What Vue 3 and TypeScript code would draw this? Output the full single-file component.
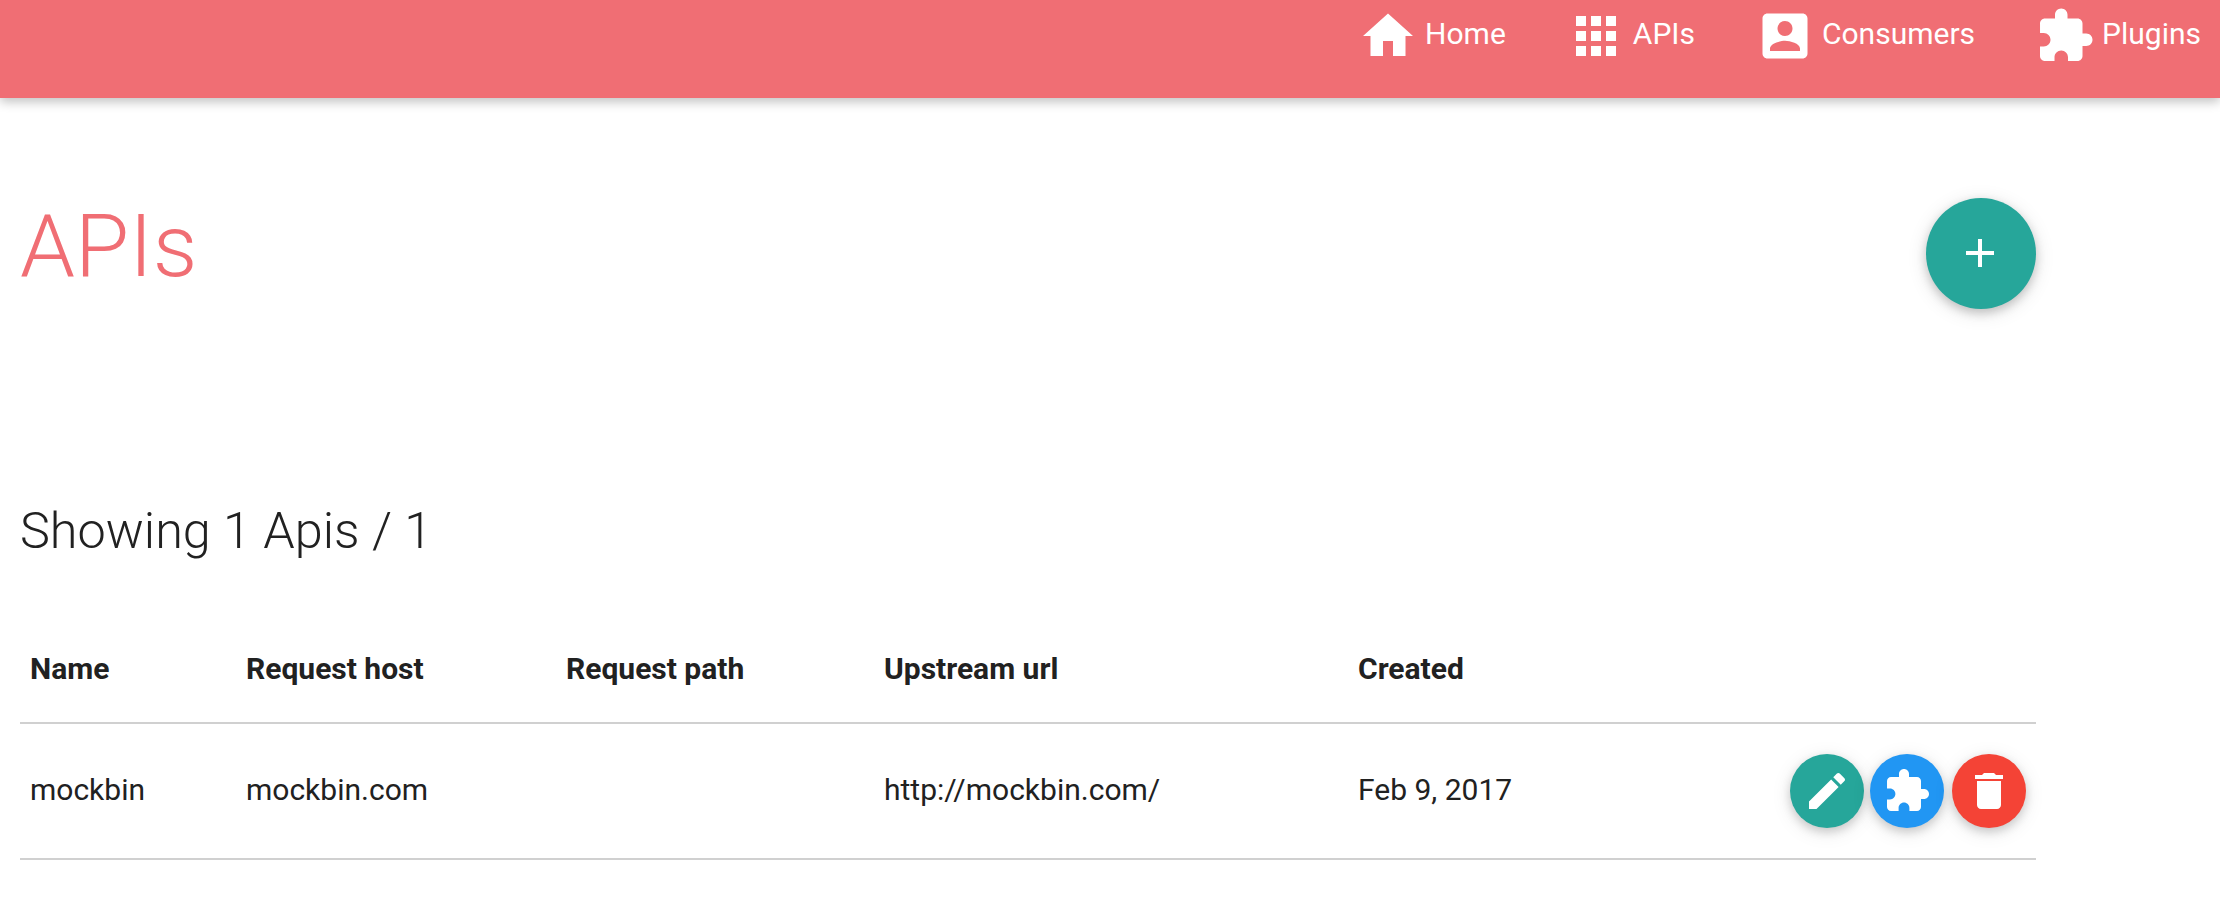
<template>
  <div class="page">
    <header class="topbar">
      <nav class="nav">
        <a v-for="link in navLinks" :key="link.label" class="nav-link" href="#">
          <svg class="nav-icon" viewBox="0 0 24 24"><path :d="link.icon" /></svg>
          <span class="nav-label">{{ link.label }}</span>
        </a>
      </nav>
    </header>

    <main class="content">
      <div class="title-row">
        <h1>APIs</h1>
        <button class="fab" type="button">
          <svg viewBox="0 0 24 24"><path d="M19 13h-6v6h-2v-6H5v-2h6V5h2v6h6v2z" /></svg>
        </button>
      </div>

      <h2>Showing {{ apis.length }} Apis / {{ apis.length }}</h2>

      <table>
        <colgroup>
          <col class="col-name" />
          <col class="col-host" />
          <col class="col-path" />
          <col class="col-upstream" />
          <col class="col-created" />
          <col />
        </colgroup>
        <thead>
          <tr>
            <th>Name</th>
            <th>Request host</th>
            <th>Request path</th>
            <th>Upstream url</th>
            <th>Created</th>
            <th></th>
          </tr>
        </thead>
        <tbody>
          <tr v-for="api in apis" :key="api.name">
            <td>{{ api.name }}</td>
            <td>{{ api.host }}</td>
            <td>{{ api.path }}</td>
            <td>{{ api.upstream }}</td>
            <td>{{ api.created }}</td>
            <td>
              <div class="actions">
                <button v-for="action in actions" :key="action.name" class="round-btn" :class="action.name" type="button">
                  <svg viewBox="0 0 24 24"><path :d="action.icon" /></svg>
                </button>
              </div>
            </td>
          </tr>
        </tbody>
      </table>
    </main>
  </div>
</template>

<script setup lang="ts">
const homeIcon = 'M10 20v-6h4v6h5v-8h3L12 3 2 12h3v8z'
const appsIcon = 'M4 8h4V4H4v4zm6 12h4v-4h-4v4zm-6 0h4v-4H4v4zm0-6h4v-4H4v4zm6 0h4v-4h-4v4zm6-10v4h4V4h-4zm-6 4h4V4h-4v4zm6 6h4v-4h-4v4zm0 6h4v-4h-4v4z'
const accountIcon = 'M3 5v14c0 1.1.89 2 2 2h14c1.1 0 2-.9 2-2V5c0-1.1-.9-2-2-2H5c-1.11 0-2 .9-2 2zm12 4c0 1.66-1.34 3-3 3s-3-1.34-3-3 1.34-3 3-3 3 1.34 3 3zm-9 8c0-2 4-3.1 6-3.1s6 1.1 6 3.1v1H6v-1z'
const puzzleIcon = 'M20.5 11H19V7c0-1.1-.9-2-2-2h-4V3.5C13 2.12 11.88 1 10.5 1S8 2.12 8 3.5V5H4c-1.1 0-1.99.9-1.99 2v3.8H3.5c1.49 0 2.7 1.21 2.7 2.7s-1.21 2.7-2.7 2.7H2V20c0 1.1.9 2 2 2h3.8v-1.5c0-1.49 1.21-2.7 2.7-2.7 1.49 0 2.7 1.21 2.7 2.7V22H17c1.1 0 2-.9 2-2v-4h1.5c1.38 0 2.5-1.12 2.5-2.5S21.88 11 20.5 11z'
const editIcon = 'M3 17.25V21h3.75L17.81 9.94l-3.75-3.75L3 17.25zM20.71 7.04c.39-.39.39-1.02 0-1.41l-2.34-2.34c-.39-.39-1.02-.39-1.41 0l-1.83 1.83 3.75 3.75 1.83-1.83z'
const deleteIcon = 'M6 19c0 1.1.9 2 2 2h8c1.1 0 2-.9 2-2V7H6v12zM19 4h-3.5l-1-1h-5l-1 1H5v2h14V4z'

const navLinks = [
  { label: 'Home', icon: homeIcon },
  { label: 'APIs', icon: appsIcon },
  { label: 'Consumers', icon: accountIcon },
  { label: 'Plugins', icon: puzzleIcon },
]

const actions = [
  { name: 'edit', icon: editIcon },
  { name: 'plugins', icon: puzzleIcon },
  { name: 'remove', icon: deleteIcon },
]

const apis = [
  { name: 'mockbin', host: 'mockbin.com', path: '', upstream: 'http://mockbin.com/', created: 'Feb 9, 2017' },
]
</script>

<style>
html,
body {
  margin: 0;
  background: #fff;
}
</style>

<style scoped>
.page {
  font-family: Roboto, "Liberation Sans", sans-serif;
  color: #212121;
  height: 904px;
  overflow: hidden;
}

.topbar {
  height: 98px;
  background-color: #f06e74;
  box-shadow: 0 4px 10px 0 rgba(0, 0, 0, 0.24);
}

.nav {
  display: flex;
  justify-content: flex-end;
  gap: 60px;
  padding: 6px 19px 0 0;
}

.nav-link {
  display: flex;
  align-items: center;
  gap: 7px;
  color: #fff;
  text-decoration: none;
  font-size: 30px;
  font-weight: 400;
}

.nav-label {
  margin-bottom: 6px;
}

.nav-icon {
  width: 60px;
  height: 60px;
  fill: #fff;
}

.content {
  width: 2016px;
  margin-left: 20px;
}

.title-row {
  display: flex;
  justify-content: space-between;
  align-items: flex-start;
  padding-top: 98px;
}

h1 {
  margin: 0;
  font-size: 88px;
  line-height: 100px;
  font-weight: 300;
  color: #f06e74;
}

.fab {
  width: 110px;
  height: 111px;
  margin-top: 2px;
  padding: 0;
  border: 0;
  border-radius: 50%;
  background: #26a69a;
  display: flex;
  align-items: center;
  justify-content: center;
  box-shadow: 0 4px 10px 0 rgba(0, 0, 0, 0.18), 0 4px 20px 0 rgba(0, 0, 0, 0.12);
}

.fab svg {
  width: 48px;
  height: 48px;
  fill: #fff;
  margin: -2px 0 0 -2px;
}

h2 {
  margin: 192px 0 52px;
  font-size: 50.4px;
  line-height: 60px;
  font-weight: 300;
}

table {
  width: 100%;
  table-layout: fixed;
  border-collapse: separate;
  border-spacing: 0;
  font-size: 30px;
}

.col-name {
  width: 216px;
}

.col-host {
  width: 320px;
}

.col-path {
  width: 318px;
}

.col-upstream {
  width: 474px;
}

.col-created {
  width: 301px;
}

th,
td {
  padding: 0 10px;
  text-align: left;
  border-bottom: 2px solid #d0d0d0;
  white-space: nowrap;
}

th {
  height: 107px;
  padding-top: 2px;
  font-weight: 700;
}

td {
  height: 130px;
  padding-bottom: 4px;
  font-weight: 400;
}

.actions {
  display: flex;
  justify-content: flex-end;
  gap: 6px;
  margin-bottom: -4px;
}

.round-btn {
  width: 74px;
  height: 74px;
  padding: 0;
  border: 0;
  border-radius: 50%;
  display: flex;
  align-items: center;
  justify-content: center;
  box-shadow: 0 4px 10px 0 rgba(0, 0, 0, 0.16), 0 4px 20px 0 rgba(0, 0, 0, 0.1);
}

.round-btn svg {
  width: 48px;
  height: 48px;
  fill: #fff;
}

.round-btn.edit {
  background: #26a69a;
}

.round-btn.plugins {
  background: #2196f3;
}

.round-btn.remove {
  background: #f44336;
  margin-left: 2px;
}
</style>
